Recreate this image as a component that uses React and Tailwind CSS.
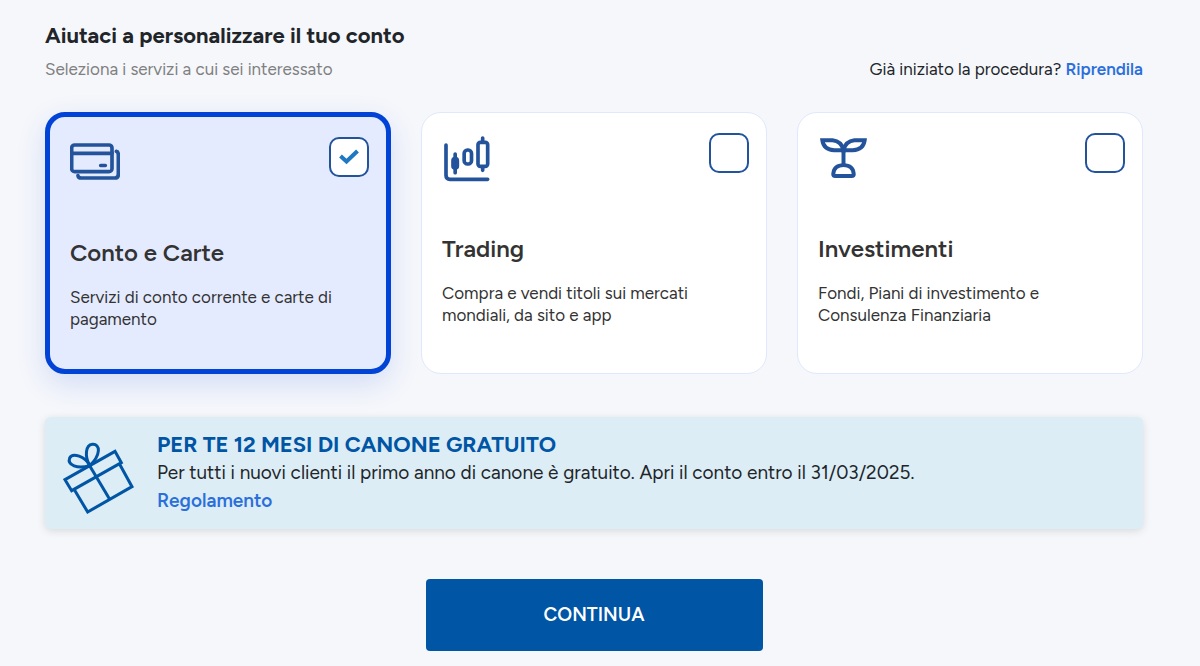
import { useState } from "react";

const CardsIcon = () => (
  <svg
    viewBox="90 114 150 111"
    className="w-[50px] h-[37px]"
    fill="none"
    stroke="#23539b"
    strokeWidth="11"
    strokeLinecap="round"
    aria-hidden="true">
    <rect x="95" y="120" width="121" height="80" rx="9" />
    <path d="M95 145H216M182 181.500H196" />
    <path d="M229 139Q235 140 235 150V208Q235 219 225 219H124Q115 219 114 212" />
  </svg>
);

const TradingIcon = () => (
  <svg
    viewBox="434 90 138 138"
    className="mt-[3px] ml-0.5 size-[46px]"
    fill="none"
    stroke="#23539b"
    strokeWidth="11"
    strokeLinecap="round"
    aria-hidden="true">
    <path d="M440 117V208Q440 220 452 220H565" />
    <path d="M467.500 144V200M550 96V106M550 185V193" />
    <rect x="461" y="158" width="13" height="28" rx="6" fill="#23539b" />
    <rect x="494.500" y="132" width="22" height="42" rx="10" />
    <rect x="536" y="109" width="29" height="72" rx="7" />
  </svg>
);

const SproutIcon = () => (
  <svg
    viewBox="359 101 142 122"
    className="mt-[3px] ml-0.5 w-[47px] h-[41px]"
    fill="none"
    stroke="#23539b"
    strokeWidth="12"
    aria-hidden="true">
    <path d="M366 107H397Q424 110 430 137H402Q370 136 366 107Z" />
    <path d="M494 107H463Q436 110 430 137H458Q490 136 494 107Z" />
    <path d="M430 135V182" />
    <path d="M399 209Q401 182 430 182Q459 182 461 209Q461 215 455 215H405Q399 215 399 209Z" />
  </svg>
);

const GiftIcon = () => (
  <svg
    viewBox="80 88 216 222"
    className="w-[72px] h-[74px] shrink-0 self-end"
    fill="none"
    stroke="#0055a5"
    strokeWidth="9"
    aria-hidden="true">
    <path d="M86 204L236 119L255 153L106 237Z" />
    <path d="M115 236L154 301L287 225L250 158" />
    <path d="M160 162L220 263" />
    <path d="M160 162C144 133 148 100 168 98C193 96 194 130 160 162Z" />
    <path d="M160 162C148 134 108 122 100 139C92 160 123 173 160 162Z" />
  </svg>
);

const services = [
  {
    id: "conto",
    title: "Conto e Carte",
    text: "Servizi di conto corrente e carte di pagamento",
    Icon: CardsIcon,
  },
  {
    id: "trading",
    title: "Trading",
    text: "Compra e vendi titoli sui mercati mondiali, da sito e app",
    Icon: TradingIcon,
  },
  {
    id: "investimenti",
    title: "Investimenti",
    text: "Fondi, Piani di investimento e Consulenza Finanziaria",
    Icon: SproutIcon,
  },
];

const ServiceCard = ({ service, checked, onToggle }) => {
  const { id, title, text, Icon } = service;

  return (
    <label
      htmlFor={id}
      className={`flex flex-col rounded-[20px] pt-5 pb-[39px] pl-5 pr-[17px] cursor-pointer ${
        checked
          ? "border-5 border-[#0043d6] bg-[#e5ebff] shadow-[0_10px_30px_rgba(0,67,214,0.14)]"
          : "border border-[#dfe8fc] bg-white"
      }`}>
      <span className="flex items-start justify-between">
        <span className="flex h-12 items-center">
          <Icon />
        </span>
        <span className="grid place-items-center">
          <input
            type="checkbox"
            id={id}
            checked={checked}
            onChange={onToggle}
            className="col-start-1 row-start-1 size-10 appearance-none rounded-[10px] border-2 border-[#23539b] bg-white cursor-pointer"
          />
          {checked && (
            <svg
              viewBox="0 0 20 16"
              className="pointer-events-none col-start-1 row-start-1 w-5 h-4"
              fill="none"
              stroke="#1f78c1"
              strokeWidth="4"
              aria-hidden="true">
              <path d="M1.500 7L7.500 12.500L18.500 2" />
            </svg>
          )}
        </span>
      </span>
      <span className="mt-[52px] text-2xl leading-8 font-semibold text-[#333]">
        {title}
      </span>
      <span className="mt-[17px] text-[17px] leading-[22px] text-[#333]">
        {text}
      </span>
    </label>
  );
};

const App = () => {
  const [selected, setSelected] = useState(["conto"]);

  const toggle = (id) => {
    setSelected((prev) =>
      prev.includes(id) ? prev.filter((item) => item !== id) : [...prev, id]
    );
  };

  return (
    <main className="min-h-screen bg-[#f5f7fb] pt-5 pb-3 pl-[45px] pr-[57px] font-['Figtree','Lato',sans-serif] text-[#212529]">
      <h1 className="text-[22px] leading-8 font-bold">
        Aiutaci a personalizzare il tuo conto
      </h1>
      <div className="mt-[5px] flex items-center justify-between text-[17px] leading-6">
        <p className="text-[#808080]">Seleziona i servizi a cui sei interessato</p>
        <p>
          Già iniziato la procedura?{" "}
          <a href="#riprendi" className="font-semibold text-[#2b6fdb]">
            Riprendila
          </a>
        </p>
      </div>

      <div className="mt-[31px] grid grid-cols-3 items-stretch gap-[30px]">
        {services.map((service) => (
          <ServiceCard
            key={service.id}
            service={service}
            checked={selected.includes(service.id)}
            onToggle={() => toggle(service.id)}
          />
        ))}
      </div>

      <section className="mt-[43px] flex items-center gap-[22px] rounded-md bg-[#dcedf5] py-3.5 pl-[18px] pr-5 shadow-[0_2px_8px_rgba(0,0,0,0.12)]">
        <GiftIcon />
        <div className="text-[19px] leading-7">
          <h2 className="text-[22px] leading-7 font-bold text-[#0055a5]">
            PER TE 12 MESI DI CANONE GRATUITO
          </h2>
          <p>
            Per tutti i nuovi clienti il primo anno di canone è gratuito. Apri il
            conto entro il 31/03/2025.
          </p>
          <a href="#regolamento" className="font-semibold text-[#2b6fdb]">
            Regolamento
          </a>
        </div>
      </section>

      <button
        type="button"
        className="mx-auto mt-[50px] block w-[337px] rounded bg-[#0055a5] py-5 text-[19px] leading-8 font-semibold text-white cursor-pointer">
        CONTINUA
      </button>
    </main>
  );
};

export default App;
